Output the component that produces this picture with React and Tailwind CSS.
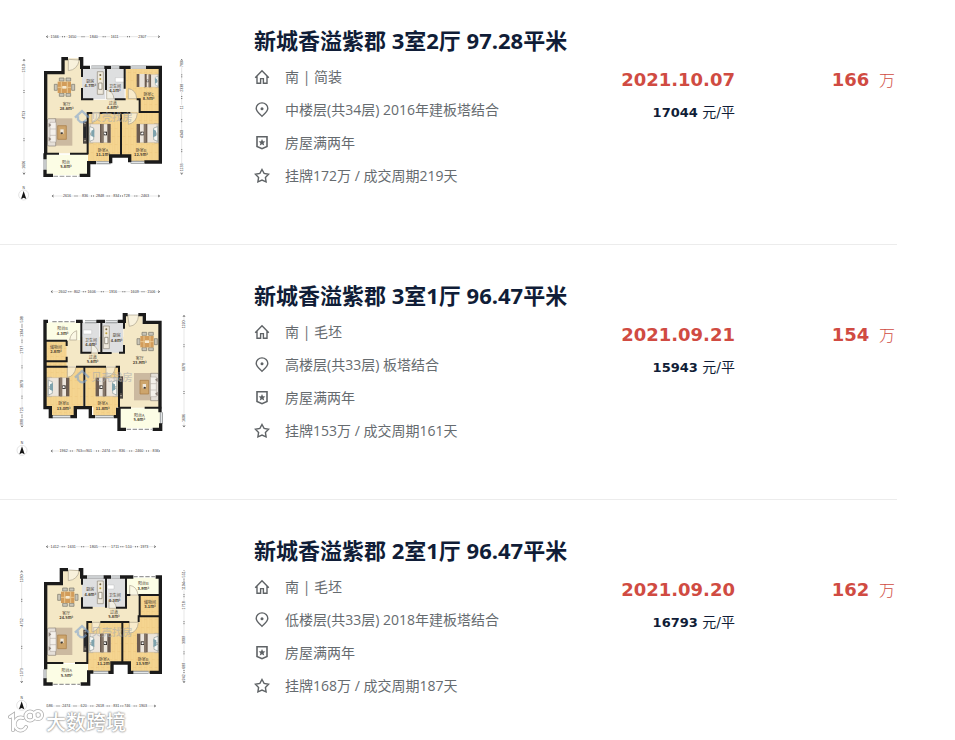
const SANS = "font-['Open_Sans','Noto_Sans_CJK_SC',sans-serif]";
const NUM = "font-['DejaVu_Sans','Noto_Sans_CJK_SC',sans-serif]";

const WOOD = '#f5d590';
const TILE = '#f4e8c6';
const WALL = '#1b1b1b';

function Label({ x, y, name, area }) {
  return (
    <g textAnchor="middle" fontSize="12" fill="#4a4030" className="font-['Noto_Sans_CJK_SC',sans-serif]">
      <text x={x} y={y}>{name}</text>
      <text x={x} y={y + 13} fontWeight="700">{area}m²</text>
    </g>
  );
}

function Wood({ d }) {
  return (
    <>
      <path d={d} fill={WOOD} />
      <path d={d} fill="url(#planks)" />
    </>
  );
}

function Dining({ x, y }) {
  return (
    <g transform={`translate(${x} ${y})`}>
      <g fill="#c9c5b8" stroke="#777468" strokeWidth="2">
        <path d="M-15-28h14v9h-14zM5-28h14v9H5zM-15 18h14v9h-14zM5 18h14v9H5zM-30-9h9V9h-9zM22-9h9V9h-9z" />
      </g>
      <path d="M-20-17h40v34h-40z" fill="#d29c5a" />
      <path d="M-9-17v34M9-17v34M-20 0h40" stroke="#e9c68f" strokeWidth="3" />
      <path d="M-6-4h12v8H-6z" fill="#f6ead0" />
    </g>
  );
}

function Sofa({ x, y, flip }) {
  return (
    <g transform={`translate(${x} ${y}) scale(${flip ? -1 : 1} 1)`}>
      <path d="M22 0h54v82H22z" fill="#cbb9a0" />
      <path d="M4 1h22v82H4q-5-3-3-11V12Q0 3 4 1z" fill="#e5dfd8" stroke="#8d8379" strokeWidth="2" />
      <path d="M9 12h18v59H9zM9 32h18M9 51h18" fill="#f4f0eb" stroke="#aaa198" strokeWidth="1.5" />
      <path d="M5 14l8 6-8 7M5 56l8 6-8 7" fill="#8e827b" />
      <path d="M32 22h26v41H32z" fill="#cda56c" stroke="#a77a42" strokeWidth="2" />
      <path d="M40 33h10v13H40z" fill="#f0e9dd" />
      <path d="M40 43l6-2 2 5-6 2z" fill="#403a34" />
    </g>
  );
}

function Bed({ x, y, flip, scale = 1 }) {
  return (
    <g transform={`translate(${x} ${y}) scale(${flip ? -scale : scale} ${scale})`}>
      <path d="M0 1h14v58H0z" fill="#d7d2c5" stroke="#938975" />
      <path d="M6 2h60v56H6z" fill="#ece5dc" stroke="#a99a84" />
      <path d="M4 10l12 4v13L4 30zM4 34l12 3v12L4 54z" fill="#f8f8f4" stroke="#8c9999" strokeWidth="2" />
      <path d="M9 22l9-4v24l-9-4z" fill="#7fa3ad" />
      <path d="M35 2h10v56H35zM57 2h10v56H57z" fill="#6b5b50" />
      <path d="M39 2h7v56h-7z" fill="#86776a" />
      <path d="M46 25h10v11H46z" fill="#37322f" />
      <path d="M48 27l6 2-2 5-5-2z" fill="#fff" />
    </g>
  );
}

function Tv({ x, y }) {
  return (
    <g transform={`translate(${x} ${y})`}>
      <path d="M0 0h12v67H0z" fill="#4d4844" />
      <path d="M2 16h7v34H2z" fill="#25272a" />
      <path d="M3 6h6M3 58h6" stroke="#a29b91" strokeWidth="3" />
    </g>
  );
}

function Stove({ x, y }) {
  return (
    <g transform={`translate(${x} ${y})`}>
      <path d="M0 0h18v68H0z" fill="#eee9dc" stroke="#8f897a" strokeWidth="2" />
      <path d="M4 34h10v19H4z" fill="#fbf9f1" stroke="#756e5e" strokeWidth="2" />
      <circle cx="9" cy="10" r="3" fill="#746542" />
      <circle cx="9" cy="22" r="3" fill="#c0a23c" />
    </g>
  );
}

function Door({ d }) {
  return <path d={d} fill="#faf5e6" fillOpacity="0.7" stroke="#aaa18c" strokeWidth="2" />;
}

function Walls({ d, thin }) {
  return (
    <g fill="none" stroke={WALL} strokeLinejoin="miter">
      <path d={d} strokeWidth="10" />
      <path d={thin} strokeWidth="6" />
    </g>
  );
}

function Windows({ d }) {
  return (
    <>
      <path d={d} stroke="#8f9294" strokeWidth="9" fill="none" />
      <path d={d} stroke="#e2e5e6" strokeWidth="4" fill="none" />
    </>
  );
}

function Brand() {
  return (
    <g opacity="0.6">
      <path d="M225 293l21-20 21 20M234 289v10q12 16 25 0" fill="none" stroke="#81a5d0" strokeWidth="7" />
      <text x="274" y="303" fontSize="31" fontWeight="500" fill="#a9adb0" className="font-['Noto_Sans_CJK_SC',sans-serif]">贝壳找房</text>
    </g>
  );
}

function Compass({ x, y }) {
  return (
    <g transform={`translate(${x} ${y})`}>
      <circle r="15" fill="none" stroke="#c8c8c8" strokeWidth="1.5" />
      <path d="M0-12l8 24-8-4-8 4z" fill="#151515" />
      <text y="-19" textAnchor="middle" fontSize="10" fill="#333" className="font-['Liberation_Sans',sans-serif]">N</text>
    </g>
  );
}

function Ruler({ from, to, at, marks, vertical }) {
  const len = to - from;
  const place = vertical ? `translate(${at} ${to}) rotate(-90)` : `translate(${from} ${at})`;
  return (
    <g transform={place} className="font-['Liberation_Sans',sans-serif]">
      <path d={`M0 0H${len}`} stroke="#ccc" strokeWidth="1.5" />
      <path d={`M6-3L1 0l5 3M${len - 6}-3l5 3-5 3`} fill="none" stroke="#444" strokeWidth="2" />
      {marks.map(([pos, text]) => {
        const p = vertical ? to - pos : pos - from;
        const w = text.length * 6 + 2;
        return (
          <g key={pos}>
            <path d={`M${p - w / 2}-5h${w}V5h-${w}z`} fill="#fff" />
            <text x={p} y="4" fontSize="11" textAnchor="middle" fill="#333">{text}</text>
          </g>
        );
      })}
      {marks.slice(1).map(([pos], i) => {
        const mid = (pos + marks[i][0]) / 2;
        const m = vertical ? to - mid : mid - from;
        return <path key={pos} d={`M${m - 3}-2v4M${m + 3}-2v4`} stroke="#555" strokeWidth="2" />;
      })}
    </g>
  );
}

function PlanA() {
  return (
    <g>
      <path d="M137 158h50v-43h53v30h6v94h171v38H263v123H137z" fill={TILE} />
      <path d="M246 145h70v92h-70zM320 145h54v92h-54z" fill="#dedfe0" />
      <Wood d="M377 147h105v278h-93v-20h-24V277h52v-38h-40zM264 277h98v127h-28v20h-70z" />
      <path d="M139 404h124v62H139z" fill="#fcfde5" />
      <Dining x={193} y={202} />
      <Sofa x={141} y={295} />
      <Tv x={249} y={304} />
      <Stove x={292} y={155} />
      <path d="M346 173h28v13h-28z" fill="#fff" stroke="#aaa" />
      <Bed x={265} y={310} />
      <Bed x={477} y={310} flip />
      <Bed x={477} y={162} flip scale={0.68} />
      <path d="M410 162h30v39h-30z" fill="#6b5b50" />
      <path d="M418 162h16v39h-16z" fill="#e8e2da" />
      <Door d="M205 118v34q27-2 33-32zM385 236v-30q23 3 25 30zM320 237v-26q20 2 22 26z" />
      <Door d="M276 279v29q21-6 25-29zM412 279q-2 29-27 34v-34z" />
      <Windows d="M274 141h40M334 141h24M394 141h45M289 428h43M392 427h40M135 418v31" />
      <Walls
        d="M204 116h-15v42h-52v243M236 116h9v26h25M313 142h20M358 142h34M438 142h43v284h-48M135 400v18M135 449v17h24M239 466h27v-38h22M332 430v-22h57v19"
        thin="M246 142v29M246 204v34h34M318 142v68M374 142v64M344 238h33M410 238h9v38h63M263 402V279h14M299 279h92M363 279v129M135 401h42M210 401h55"
      />
      <path d="M160 469h79" stroke="#aaa" strokeWidth="4" strokeDasharray="14 5" />
      <Label x={200} y={257} name="客厅" area="28.6" />
      <Label x={271} y={188} name="厨房" area="4.7" />
      <Label x={345} y={204} name="卫生间" area="4.1" />
      <Label x={338} y={255} name="过道" area="4.8" />
      <Label x={446} y={227} name="卧室C" area="8.5" />
      <Label x={309} y={395} name="卧室A" area="11.1" />
      <Label x={423} y={395} name="卧室B" area="12.5" />
      <Label x={198} y={431} name="阳台" area="5.8" />
      <Brand />
      <Ruler from={138} to={480} at={50} marks={[[164, '1566'], [217, '1650'], [281, '1840'], [344, '1611'], [427, '2307']]} />
      <Ruler from={155} to={480} at={528} marks={[[201, '2616'], [255, '836'], [300, '2848'], [349, '834'], [380, '728'], [435, '2463']]} />
      <Ruler vertical from={117} to={464} at={72} marks={[[145, '1310'], [284, '4753'], [434, '1606']]} />
      <Ruler vertical from={117} to={464} at={545} marks={[[132, '780'], [203, '2338'], [262, '11'], [342, '4340'], [442, '1133']]} />
      <Compass x={71} y={525} />
    </g>
  );
}

function PlanB() {
  return (
    <g transform="translate(0 15)">
      <path d="M200 180h40v-10h130v-65h58v22h51v256H357V258H200z" fill={TILE} />
      <path d="M248 127h50v91h-50zM307 127h62v91h-62z" fill="#dedfe0" />
      <Wood d="M138 184h62v76h50v122h-23v26h-75v-26h-14zM256 260h100v122h-6v26h-70v-26h-24z" />
      <path d="M138 127h103v52H138zM362 385h120v60H362z" fill="#fcfde5" />
      <Dining x={441} y={185} />
      <Sofa x={478} y={279} flip />
      <Tv x={357} y={289} />
      <Stove x={310} y={138} />
      <path d="M250 150h25v12h-25z" fill="#fff" stroke="#aaa" />
      <Bed x={141} y={291} />
      <Bed x={354} y={291} flip />
      <Door d="M383 105h33q-3 32-28 34zM230 180v-28q-18 6-21 28zM274 219v-25q18 4 21 25z" />
      <Door d="M202 261h26q-4 28-26 31zM318 261h28q-4 28-28 31z" />
      <Windows d="M255 125h35M317 125h35M155 410h56M286 410h54M484 397v34" />
      <Walls
        d="M228 124h20M144 124h-9v259h16v27h7M211 410h15v-27h45v27h14M341 410h12v-27M289 124h26M353 124h20v-20h10M415 104h18v23h47v270M482 430v18h-24M378 448h-21v-65"
        thin="M135 182h66M244 124v94h30M200 182v16M200 230v14h-65M304 124v95h-10M304 219h31M372 124v22M372 195v23h-15M135 260h68M228 260h90M347 260h10v123M253 260v123M357 383h36M434 383h50"
      />
      <path d="M157 125h68M380 448h75" stroke="#999" strokeWidth="4" strokeDasharray="13 5" />
      <Label x={188} y={151} name="阳台B" area="4.3" />
      <Label x={168} y={207} name="储物间" area="2.8" />
      <Label x={273} y={186} name="卫生间" area="4.4" />
      <Label x={350} y={172} name="厨房" area="4.6" />
      <Label x={278} y={236} name="过道" area="5.6" />
      <Label x={419} y={239} name="客厅" area="23.9" />
      <Label x={191} y={376} name="卧室B" area="13.0" />
      <Label x={308} y={376} name="卧室A" area="11.8" />
      <Label x={418} y={411} name="阳台A" area="5.6" />
      <Brand />
      <Ruler from={152} to={480} at={35} marks={[[188, '2602'], [231, '802'], [275, '1606'], [339, '1916'], [404, '1609'], [454, '1506']]} />
      <Ruler from={152} to={480} at={513} marks={[[191, '1962'], [237, '763'], [267, '901'], [318, '2474'], [366, '836'], [418, '2460'], [467, '836']]} />
      <Ruler vertical from={108} to={442} at={66} marks={[[118, '508'], [158, '1394'], [209, '1737'], [312, '3870'], [391, '725'], [426, '998']]} />
      <Ruler vertical from={105} to={442} at={552} marks={[[133, '1190'], [261, '6078'], [414, '1606']]} />
      <Compass x={66} y={511} />
    </g>
  );
}

function PlanC() {
  return (
    <g transform="translate(0 15)">
      <path d="M137 147h50v-42h53v28h6v48h172v80H262v123H137z" fill={TILE} />
      <path d="M246 128h70v88h-70zM322 128h55v91h-55z" fill="#dedfe0" />
      <Wood d="M419 180h63v234h-92v-32h-23V262h52zM264 262h103v120h-32v30h-71z" />
      <path d="M381 128h100v50H381zM137 387h125v60H137z" fill="#fcfde5" />
      <Dining x={203} y={187} />
      <Sofa x={141} y={278} />
      <Tv x={250} y={284} />
      <Stove x={292} y={138} />
      <path d="M322 150h20v12h-20z" fill="#fff" stroke="#aaa" />
      <Bed x={265} y={294} />
      <Bed x={478} y={294} flip />
      <Door d="M205 105v32q27-2 33-30zM389 180v-29q22 3 25 29zM327 220v-26q20 4 22 26z" />
      <Door d="M276 262v29q21-6 25-29zM415 262q-2 29-27 34v-34z" />
      <Windows d="M260 126h52M334 126h27M280 412h45M398 412h48M135 403v28" />
      <Walls
        d="M204 104h-20v42h-47v257M236 104h9v22h16M311 126h22M360 126h40M467 126h14v286h-32M135 430v17h23M242 447h24v-36h14M325 412h11v-28h52v28h12"
        thin="M246 126v23M246 187v31h32M318 126v68M378 126v92h-30M318 194v24M378 180h13M415 180h66M419 180v64h62M262 383V261h14M301 261h87M416 261v-20M367 261v122M135 384h55M225 384h40"
      />
      <path d="M400 125h67M160 448h80" stroke="#999" strokeWidth="4" strokeDasharray="13 5" />
      <Label x={199} y={240} name="客厅" area="24.5" />
      <Label x={271} y={169} name="厨房" area="4.6" />
      <Label x={344} y={187} name="卫生间" area="4.3" />
      <Label x={342} y={236} name="过道" area="5.8" />
      <Label x={430} y={151} name="阳台B" area="3.9" />
      <Label x={450} y={206} name="储物间" area="3.1" />
      <Label x={313} y={377} name="卧室A" area="11.2" />
      <Label x={429} y={377} name="卧室B" area="13.5" />
      <Label x={200} y={412} name="阳台A" area="5.5" />
      <Brand />
      <Ruler from={138} to={468} at={35} marks={[[164, '1412'], [215, '1631'], [281, '1805'], [345, '1711'], [386, '510'], [433, '1973']]} />
      <Ruler from={138} to={468} at={513} marks={[[149, '586'], [199, '2474'], [251, '620'], [300, '2618'], [349, '831'], [382, '746'], [429, '1903']]} />
      <Ruler vertical from={106} to={444} at={65} marks={[[130, '1180'], [262, '4752'], [412, '1573']]} />
      <Ruler vertical from={106} to={444} at={552} marks={[[118, '551'], [153, '1104'], [211, '1718'], [315, '3909'], [392, '689'], [427, '942']]} />
      <Compass x={65} y={511} />
    </g>
  );
}

function FloorPlan({ children, title }) {
  return (
    <svg viewBox="0 0 600 570" className="h-[190px] w-[200px] shrink-0" role="img" aria-label={title}>
      <defs>
        <pattern id="planks" width="16" height="48" patternUnits="userSpaceOnUse">
          <path d="M0 0v48M8 0v48M0 14h8M8 38h8" stroke="#d6a451" strokeOpacity="0.3" strokeWidth="1.5" fill="none" />
        </pattern>
      </defs>
      {children}
    </svg>
  );
}

const iconProps = {
  viewBox: '0 0 16 16',
  className: 'size-4 shrink-0',
  fill: 'none',
  stroke: '#5f6366',
  strokeWidth: 1.4,
  'aria-hidden': true,
};

const HomeIcon = () => (
  <svg {...iconProps}>
    <path d="M1.2 8.8L8 1.8l6.8 7M3 7.2v7.1h3.6V9.600h2.800v4.700H13V7.200" />
  </svg>
);

const PinIcon = () => (
  <svg {...iconProps}>
    <path d="M8 14.3C5 11.300 2.200 9.200 2.200 6.500a5.800 5.600 0 0 1 11.600 0C13.800 9.200 11 11.300 8 14.300z" />
    <circle cx="8" cy="6.700" r="1.500" fill="#5f6366" stroke="none" />
  </svg>
);

const BadgeIcon = () => (
  <svg {...iconProps}>
    <path d="M3 1.700h10v9.800l-5 2.200-5-2.200z" strokeWidth="1.600" />
    <path d="M8 4l1 2.200 2.400.2-1.800 1.600.6 2.400L8 9.200l-2.200 1.200.6-2.400-1.800-1.600 2.400-.2z" fill="#5f6366" stroke="none" />
  </svg>
);

const StarIcon = () => (
  <svg {...iconProps}>
    <path d="M8 1.500l2.100 3.900 4.500.8-3.200 3.200.7 4.400L8 12.100l-4.100 1.700.7-4.400L1.400 6.200l4.500-.8z" />
  </svg>
);

const listings = [
  {
    title: '新城香溢紫郡 3室2厅 97.28平米',
    facts: ['南 | 简装', '中楼层(共34层) 2016年建板塔结合', '房屋满两年', '挂牌172万 / 成交周期219天'],
    date: '2021.10.07', unit: '17044', total: '166', Plan: PlanA,
  },
  {
    title: '新城香溢紫郡 3室1厅 96.47平米',
    facts: ['南 | 毛坯', '高楼层(共33层) 板塔结合', '房屋满两年', '挂牌153万 / 成交周期161天'],
    date: '2021.09.21', unit: '15943', total: '154', Plan: PlanB,
  },
  {
    title: '新城香溢紫郡 2室1厅 96.47平米',
    facts: ['南 | 毛坯', '低楼层(共33层) 2018年建板塔结合', '房屋满两年', '挂牌168万 / 成交周期187天'],
    date: '2021.09.20', unit: '16793', total: '162', Plan: PlanC,
  },
];

const factIcons = [HomeIcon, PinIcon, BadgeIcon, StarIcon];

function Listing({ title, facts, date, unit, total, Plan }) {
  return (
    <li className="flex items-start border-b border-[#ececec] pt-[30px] pb-[34px] first:pt-5 last:border-b-0 last:pb-0">
      <FloorPlan title={title}>
        <Plan />
      </FloorPlan>
      <div className="ml-[54px] min-w-0 flex-1">
        <h2 className="text-[22px] leading-10 font-bold whitespace-nowrap text-[#101d37]">{title}</h2>
        <ul>
          {facts.map((fact, i) => {
            const Icon = factIcons[i];
            return (
              <li key={i} className="flex h-[33px] items-center gap-[15px] text-sm whitespace-nowrap text-[#666b6f]">
                <Icon />
                <span>{fact}</span>
              </li>
            );
          })}
        </ul>
      </div>
      <div className={`mt-11 text-right text-[#101d37] ${NUM}`}>
        <p className="text-lg leading-8 font-bold text-[#d04b42]">{date}</p>
        <p className="text-sm leading-8">
          <b className="text-[13px]">{unit}</b> 元/平
        </p>
      </div>
      <p className={`mt-11 w-[162px] pr-[2px] text-right text-lg leading-8 text-[#d04b42] ${NUM}`}>
        <b>{total}</b> <span className="ml-1 text-base font-light">万</span>
      </p>
    </li>
  );
}

function Watermark() {
  return (
    <div className="absolute bottom-0.5 left-2 flex items-center gap-0.5">
      <svg viewBox="0 0 36 26" className="h-[26px] w-9" fill="none" aria-hidden="true">
        <g stroke="#b0b0b0" strokeWidth="4" strokeLinecap="round">
          <path d="M2 8l3-2v15M15 9a6 6.500 0 1 0 3 9" />
          <circle cx="22" cy="7" r="4.500" />
          <circle cx="30" cy="6" r="4" />
        </g>
        <g stroke="#fff" strokeWidth="2.400" strokeLinecap="round">
          <path d="M2 8l3-2v15M15 9a6 6.500 0 1 0 3 9" />
          <circle cx="22" cy="7" r="4.500" />
          <circle cx="30" cy="6" r="4" />
        </g>
      </svg>
      <span className="font-['Noto_Sans_CJK_SC',sans-serif] text-xl leading-8 font-medium text-white [text-shadow:0_0_2px_#888,0_0_2px_#888]">
        大数跨境
      </span>
    </div>
  );
}

export default function App() {
  return (
    <main className={`relative min-h-screen bg-white pr-[58px] ${SANS}`}>
      <ul>
        {listings.map((item) => (
          <Listing key={item.date} {...item} />
        ))}
      </ul>
      <Watermark />
    </main>
  );
}
